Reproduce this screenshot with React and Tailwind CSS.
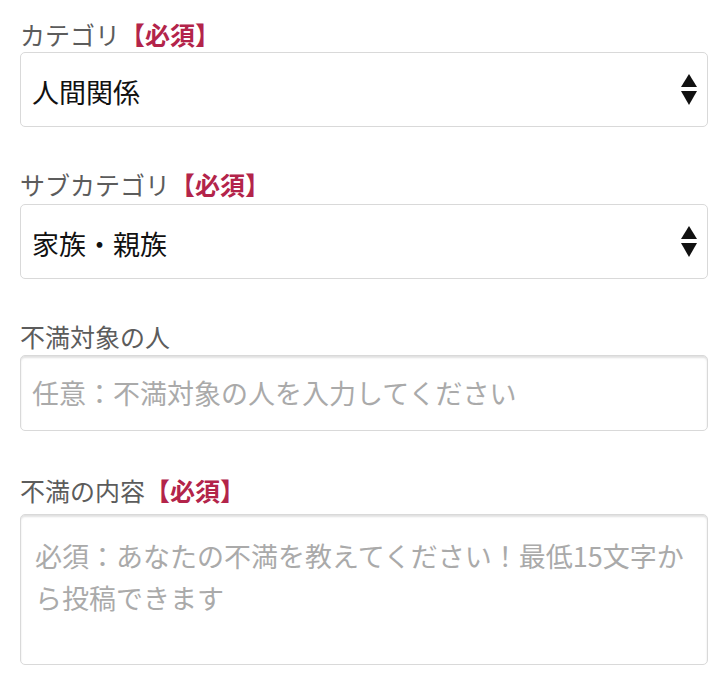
import React from "react";

const font = { fontFamily: '"Noto Sans CJK JP", "Noto Sans", sans-serif' };

const Required = () => (
  <span className="font-bold text-[#b3244a]">【必須】</span>
);

const Label = ({ children, required, className = "" }) => (
  <div className={`h-9 text-[25px] leading-9 text-[#5c5c5c] ${className}`}>
    {children}
    {required && <Required />}
  </div>
);

const SelectArrows = () => (
  <svg width="18" height="34" viewBox="0 0 18 34" className="shrink-0">
    <path d="M9 1 L17 14 L1 14 Z" fill="#111" />
    <path d="M1 18 L17 18 L9 32 Z" fill="#111" />
  </svg>
);

const SelectBox = ({ value }) => (
  <div className="flex h-[75px] items-center justify-between rounded-[5px] border border-[#d9d9d9] bg-white pl-[11px] pr-[9px]">
    <span className="mt-[6px] text-[27px] text-[#111]">{value}</span>
    <SelectArrows />
  </div>
);

export default function App() {
  return (
    <div className="min-h-screen bg-white px-5 pt-4" style={font}>
      <Label required>カテゴリ</Label>
      <SelectBox value="人間関係" />

      <Label required className="mt-[39px]">サブカテゴリ</Label>
      <div className="mt-[2px]">
        <SelectBox value="家族・親族" />
      </div>

      <Label className="mt-[39px]">不満対象の人</Label>
      <div className="mt-[1px] flex h-[76px] items-center rounded-[5px] border border-[#d9d9d9] bg-white pl-[11px] shadow-[inset_0_2px_2px_rgba(0,0,0,0.12)]">
        <span className="text-[27px] text-[#aaa]">任意：不満対象の人を入力してください</span>
      </div>

      <Label required className="mt-[41px]">不満の内容</Label>
      <div className="mt-[6px] h-[151px] rounded-[5px] border border-[#d9d9d9] bg-white px-[14px] pt-[20px] shadow-[inset_0_2px_2px_rgba(0,0,0,0.12)]">
        <p className="whitespace-nowrap text-[27px] leading-[42px] text-[#aaa]">
          必須：あなたの不満を教えてください！最低15文字か
          <br />
          ら投稿できます
        </p>
      </div>
    </div>
  );
}
